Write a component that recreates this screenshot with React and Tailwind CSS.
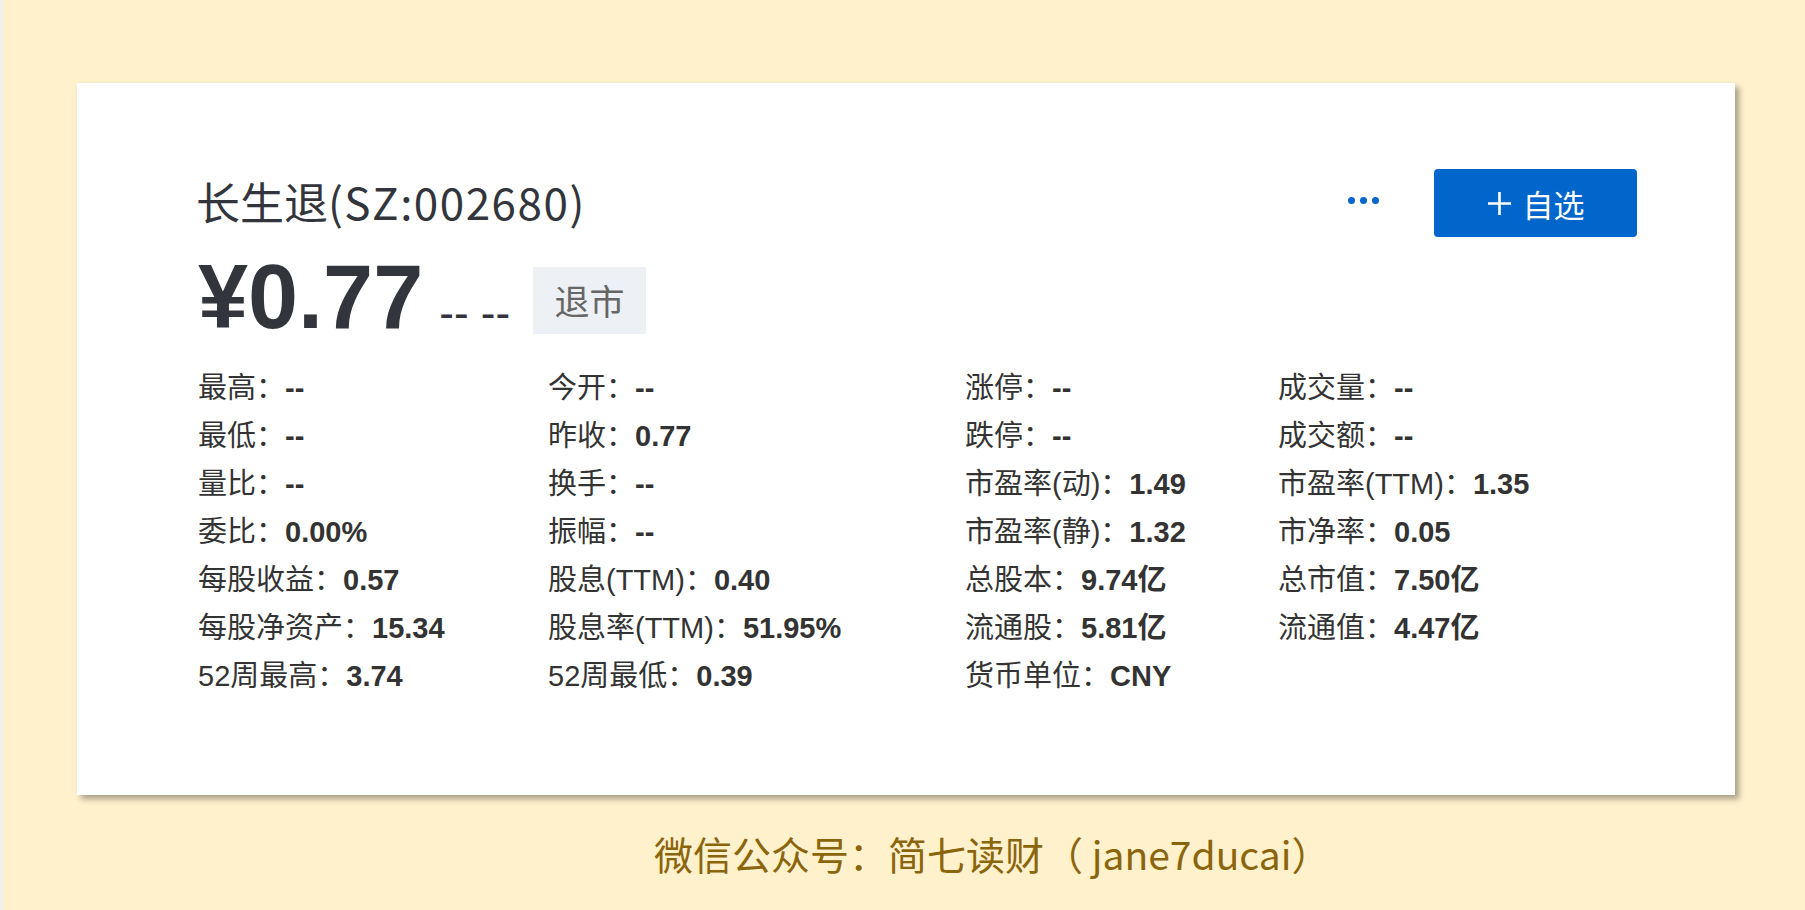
import React from "react";

const rows = [
  [["最高", "--"], ["今开", "--"], ["涨停", "--"], ["成交量", "--"]],
  [["最低", "--"], ["昨收", "0.77"], ["跌停", "--"], ["成交额", "--"]],
  [["量比", "--"], ["换手", "--"], ["市盈率(动)", "1.49"], ["市盈率(TTM)", "1.35"]],
  [["委比", "0.00%"], ["振幅", "--"], ["市盈率(静)", "1.32"], ["市净率", "0.05"]],
  [["每股收益", "0.57"], ["股息(TTM)", "0.40"], ["总股本", "9.74亿"], ["总市值", "7.50亿"]],
  [["每股净资产", "15.34"], ["股息率(TTM)", "51.95%"], ["流通股", "5.81亿"], ["流通值", "4.47亿"]],
  [["52周最高", "3.74"], ["52周最低", "0.39"], ["货币单位", "CNY"], null],
];

export default function App() {
  return (
    <div className="min-h-[910px] w-full bg-[#fff1cc] border-l-[3px] border-[#eef0f2] overflow-hidden">
      <div className="pt-[83px] pl-[74px]">
        <div className="w-[1658px] h-[712px] bg-white shadow-[4px_4px_6px_rgba(0,0,0,0.35)] pt-[86px] pl-[121px] pr-[98px]">
          <div className="flex items-center justify-between h-[68px]">
            <div
              className="-ml-[2px] mb-[5px] text-[44px] leading-[50px] text-[#33353c]"
              style={{ fontFamily: "'Noto Sans CJK SC', sans-serif" }}
            >
              长生退<span className="tracking-[1.5px]">(SZ:002680)</span>
            </div>
            <div className="flex items-center">
              <div className="flex items-center gap-[5px] -mt-[6px]">
                <span className="w-[7px] h-[7px] rounded-full bg-[#0066cc]" />
                <span className="w-[7px] h-[7px] rounded-full bg-[#0066cc]" />
                <span className="w-[7px] h-[7px] rounded-full bg-[#0066cc]" />
              </div>
              <button
                className="ml-[55px] w-[203px] h-[68px] rounded-[4px] bg-[#0066cc] text-white flex items-center justify-center"
                style={{ fontFamily: "'Noto Sans CJK SC', sans-serif" }}
              >
                <svg width="25" height="25" viewBox="0 0 25 25" className="mr-[11px]">
                  <path d="M12.5 1v23M1 12.5h23" stroke="white" strokeWidth="2.6" />
                </svg>
                <span className="text-[31px] leading-none">自选</span>
              </button>
            </div>
          </div>

          <div className="mt-[15px] h-[90px] flex items-start">
            <div
              className="flex items-baseline text-[#33353c]"
              style={{ fontFamily: "'Liberation Sans', Arial, sans-serif" }}
            >
              <span className="text-[90px] leading-[90px] font-bold">¥0.77</span>
              <span className="ml-[16px] text-[44px] leading-none">-- --</span>
            </div>
            <div
              className="ml-[23px] mt-[15px] h-[67px] w-[113px] bg-[#edf0f5] text-[#666666] text-[35px] flex items-center justify-center"
              style={{ fontFamily: "'Noto Sans CJK SC', sans-serif" }}
            >
              退市
            </div>
          </div>

          <div
            className="mt-[22px] grid grid-cols-[350px_417px_313px_1fr] text-[29px] leading-[48px] text-[#333333]"
            style={{ fontFamily: "'Liberation Sans', 'Noto Sans CJK SC', sans-serif" }}
          >
            {rows.map((row, i) =>
              row.map((cell, j) => (
                <div key={i + "-" + j} className="whitespace-nowrap">
                  {cell ? (
                    <>
                      <span>{cell[0]}：</span>
                      <span className="font-bold">{cell[1]}</span>
                    </>
                  ) : null}
                </div>
              ))
            )}
          </div>
        </div>
      </div>
      <div
        className="mt-[28px] pl-[651px] text-[39px] leading-[60px] text-[#8b650b]"
        style={{ fontFamily: "'Noto Sans CJK SC', sans-serif" }}
      >
        微信公众号：简七读财（ jane7ducai）
      </div>
    </div>
  );
}
